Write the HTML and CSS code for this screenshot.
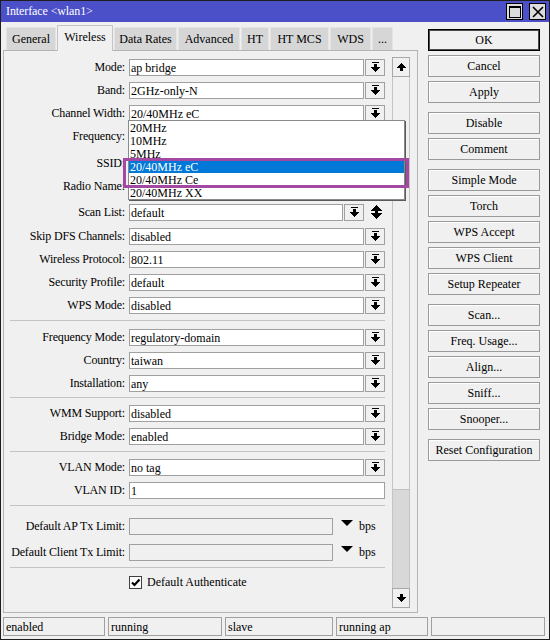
FILE: index.html
```html
<!DOCTYPE html>
<html>
<head>
<meta charset="utf-8">
<link rel="stylesheet" href="styles.css">
</head>
<body>
<svg class="defs" width="0" height="0">
  <defs>
    <symbol id="i-dd" viewBox="0 0 9 10">
      <rect x="1" y="0" width="7" height="1"/>
      <rect x="3" y="2" width="3" height="3"/>
      <rect x="0" y="5" width="9" height="1"/>
      <rect x="1" y="6" width="7" height="1"/>
      <rect x="2" y="7" width="5" height="1"/>
      <rect x="3" y="8" width="3" height="1"/>
      <rect x="4" y="9" width="1" height="1"/>
    </symbol>
    <symbol id="i-up" viewBox="0 0 9 8">
      <rect x="4" y="0" width="1" height="1"/>
      <rect x="3" y="1" width="3" height="1"/>
      <rect x="2" y="2" width="5" height="1"/>
      <rect x="1" y="3" width="7" height="1"/>
      <rect x="0" y="4" width="9" height="1"/>
      <rect x="3" y="5" width="3" height="3"/>
    </symbol>
    <symbol id="i-down" viewBox="0 0 9 8">
      <rect x="3" y="0" width="3" height="3"/>
      <rect x="0" y="3" width="9" height="1"/>
      <rect x="1" y="4" width="7" height="1"/>
      <rect x="2" y="5" width="5" height="1"/>
      <rect x="3" y="6" width="3" height="1"/>
      <rect x="4" y="7" width="1" height="1"/>
    </symbol>
    <symbol id="i-updown" viewBox="0 0 11 14">
      <rect x="5" y="0" width="1" height="1"/>
      <rect x="4" y="1" width="3" height="1"/>
      <rect x="3" y="2" width="5" height="1"/>
      <rect x="2" y="3" width="7" height="1"/>
      <rect x="1" y="4" width="9" height="1"/>
      <rect x="0" y="5" width="11" height="1"/>
      <rect x="4" y="6" width="3" height="2"/>
      <rect x="0" y="8" width="11" height="1"/>
      <rect x="1" y="9" width="9" height="1"/>
      <rect x="2" y="10" width="7" height="1"/>
      <rect x="3" y="11" width="5" height="1"/>
      <rect x="4" y="12" width="3" height="1"/>
      <rect x="5" y="13" width="1" height="1"/>
    </symbol>
  </defs>
</svg>

<div class="window">
  <div class="titlebar">
    <span class="title">Interface &lt;wlan1&gt;</span>
    <div class="tb-btns">
      <span class="tb-btn">
        <svg width="12" height="12" viewBox="0 0 12 12" shape-rendering="crispEdges"><rect x="0.5" y="0.5" width="11" height="11" fill="none" stroke="#000"/><rect x="0" y="0" width="12" height="2" fill="#000"/></svg>
      </span>
      <span class="tb-btn">
        <svg width="12" height="12" viewBox="0 0 12 12"><path d="M1 1 L11 11 M11 1 L1 11" stroke="#000" stroke-width="1.6" fill="none"/></svg>
      </span>
    </div>
  </div>

  <div class="main">
    <div class="left">
      <div class="tabs">
        <div class="tab t-general">General</div>
        <div class="tab active t-wireless">Wireless</div>
        <div class="tab t-rates">Data Rates</div>
        <div class="tab t-adv">Advanced</div>
        <div class="tab t-ht">HT</div>
        <div class="tab t-htmcs">HT MCS</div>
        <div class="tab t-wds">WDS</div>
        <div class="tab t-more">...</div>
      </div>

      <div class="panel">
        <div class="form">
          <div class="row first">
            <span class="lbl">Mode:</span>
            <div class="field"><span class="inp">ap bridge</span><span class="dd"><svg class="ico"><use href="#i-dd"/></svg></span></div>
          </div>
          <div class="row">
            <span class="lbl">Band:</span>
            <div class="field"><span class="inp">2GHz-only-N</span><span class="dd"><svg class="ico"><use href="#i-dd"/></svg></span></div>
          </div>
          <div class="row">
            <span class="lbl">Channel Width:</span>
            <div class="field"><span class="inp">20/40MHz eC</span><span class="dd"><svg class="ico"><use href="#i-dd"/></svg></span></div>
          </div>
          <div class="row">
            <span class="lbl">Frequency:</span>
            <div class="field"><span class="inp"></span><span class="dd"><svg class="ico"><use href="#i-dd"/></svg></span></div>
          </div>
          <div class="row mt10">
            <span class="lbl">SSID:</span>
            <div class="field"><span class="inp"></span><span class="dd"><svg class="ico"><use href="#i-dd"/></svg></span></div>
          </div>
          <div class="row">
            <span class="lbl">Radio Name:</span>
            <div class="field"><span class="inp"></span></div>
          </div>
          <div class="row mt9">
            <span class="lbl">Scan List:</span>
            <div class="field"><span class="inp">default</span><span class="dd"><svg class="ico"><use href="#i-dd"/></svg></span><span class="updown"><svg class="ico-ud"><use href="#i-updown"/></svg></span></div>
          </div>
          <div class="row mt7">
            <span class="lbl">Skip DFS Channels:</span>
            <div class="field"><span class="inp">disabled</span><span class="dd"><svg class="ico"><use href="#i-dd"/></svg></span></div>
          </div>
          <div class="row">
            <span class="lbl">Wireless Protocol:</span>
            <div class="field"><span class="inp">802.11</span><span class="dd"><svg class="ico"><use href="#i-dd"/></svg></span></div>
          </div>
          <div class="row">
            <span class="lbl">Security Profile:</span>
            <div class="field"><span class="inp">default</span><span class="dd"><svg class="ico"><use href="#i-dd"/></svg></span></div>
          </div>
          <div class="row">
            <span class="lbl">WPS Mode:</span>
            <div class="field"><span class="inp">disabled</span><span class="dd"><svg class="ico"><use href="#i-dd"/></svg></span></div>
          </div>

          <div class="sep mt7"></div>

          <div class="row mt7">
            <span class="lbl">Frequency Mode:</span>
            <div class="field"><span class="inp">regulatory-domain</span><span class="dd"><svg class="ico"><use href="#i-dd"/></svg></span></div>
          </div>
          <div class="row">
            <span class="lbl">Country:</span>
            <div class="field"><span class="inp">taiwan</span><span class="dd"><svg class="ico"><use href="#i-dd"/></svg></span></div>
          </div>
          <div class="row">
            <span class="lbl">Installation:</span>
            <div class="field"><span class="inp">any</span><span class="dd"><svg class="ico"><use href="#i-dd"/></svg></span></div>
          </div>

          <div class="sep"></div>

          <div class="row">
            <span class="lbl">WMM Support:</span>
            <div class="field"><span class="inp">disabled</span><span class="dd"><svg class="ico"><use href="#i-dd"/></svg></span></div>
          </div>
          <div class="row">
            <span class="lbl">Bridge Mode:</span>
            <div class="field"><span class="inp">enabled</span><span class="dd"><svg class="ico"><use href="#i-dd"/></svg></span></div>
          </div>

          <div class="sep mt7"></div>

          <div class="row">
            <span class="lbl">VLAN Mode:</span>
            <div class="field"><span class="inp">no tag</span><span class="dd"><svg class="ico"><use href="#i-dd"/></svg></span></div>
          </div>
          <div class="row">
            <span class="lbl">VLAN ID:</span>
            <div class="field"><span class="inp">1</span></div>
          </div>

          <div class="sep mt7"></div>

          <div class="row mt11">
            <span class="lbl">Default AP Tx Limit:</span>
            <div class="field"><span class="inp dis"></span><svg class="tri" width="12" height="6" viewBox="0 0 12 6"><polygon points="0,0 12,0 6,6"/></svg><span class="bps">bps</span></div>
          </div>
          <div class="row mt9">
            <span class="lbl">Default Client Tx Limit:</span>
            <div class="field"><span class="inp dis"></span><svg class="tri" width="12" height="6" viewBox="0 0 12 6"><polygon points="0,0 12,0 6,6"/></svg><span class="bps">bps</span></div>
          </div>

          <div class="sep mt7"></div>

          <div class="row">
            <span class="lbl"></span>
            <div class="field"><span class="chk"><svg width="11" height="11" viewBox="0 0 11 11"><path d="M2 5.5 L4.5 8 L9.5 2.5" stroke="#000" stroke-width="2.2" fill="none"/></svg></span><span class="chk-text">Default Authenticate</span></div>
          </div>
        </div>

        <div class="sb">
          <div class="sb-btn"><svg class="ico-sb"><use href="#i-up"/></svg></div>
          <div class="sb-track"><div class="sb-thumb"></div></div>
          <div class="sb-btn"><svg class="ico-sb"><use href="#i-down"/></svg></div>
        </div>

        <div class="popup">
          <div class="opt">20MHz</div>
          <div class="opt">10MHz</div>
          <div class="opt">5MHz</div>
          <div class="opt sel">20/40MHz eC</div>
          <div class="opt">20/40MHz Ce</div>
          <div class="opt">20/40MHz XX</div>
        </div>
        <div class="mark"></div>
      </div>
    </div>

    <div class="buttons">
      <div class="btn ok">OK</div>
      <div class="btn">Cancel</div>
      <div class="btn">Apply</div>
      <div class="btn grp">Disable</div>
      <div class="btn">Comment</div>
      <div class="btn grp">Simple Mode</div>
      <div class="btn">Torch</div>
      <div class="btn">WPS Accept</div>
      <div class="btn">WPS Client</div>
      <div class="btn">Setup Repeater</div>
      <div class="btn grp">Scan...</div>
      <div class="btn">Freq. Usage...</div>
      <div class="btn">Align...</div>
      <div class="btn">Sniff...</div>
      <div class="btn">Snooper...</div>
      <div class="btn grp">Reset Configuration</div>
    </div>
  </div>

  <div class="status">
    <div class="cell c1">enabled</div>
    <div class="cell c2">running</div>
    <div class="cell c3">slave</div>
    <div class="cell c4">running ap</div>
    <div class="cell c5"></div>
  </div>
</div>
</body>
</html>
```
FILE: styles.css
```css
* { box-sizing: border-box; }

body {
  margin: 0;
  font-family: "Liberation Serif", "Times New Roman", serif;
  font-size: 12px;
  color: #000;
  background: #f0f0f0;
}

.defs { position: absolute; width: 0; height: 0; overflow: hidden; }

.window {
  width: 550px;
  height: 640px;
  border: 1px solid #1e1e1e;
  display: flex;
  flex-direction: column;
  background: #f0f0f0;
}

/* title bar */
.titlebar {
  height: 21px;
  flex: none;
  background: #4b4fc8;
  color: #fff;
  display: flex;
  align-items: center;
  padding: 0 3px 0 5px;
}
.title { font-size: 12px; line-height: 21px; letter-spacing: -0.1px; }
.tb-btns { margin-left: auto; display: flex; gap: 6px; }
.tb-btn {
  width: 17px;
  height: 17px;
  border: 1px solid #000;
  background: #dcdcdc;
  display: flex;
  align-items: center;
  justify-content: center;
}

/* main area */
.main { display: flex; height: 591px; flex: none; }
.left { margin-left: 2px; width: 415px; display: flex; flex-direction: column; }

.tabs {
  height: 28px;
  display: flex;
  align-items: flex-end;
  padding-left: 3px;
  gap: 1px;
  position: relative;
  z-index: 1;
}
.tab {
  height: 23px;
  background: #d6d6d6;
  border: 1px solid #e4e4e4;
  border-bottom: none;
  text-align: center;
  line-height: 22px;
  white-space: nowrap;
}
.tab.active {
  height: 26px;
  margin-bottom: -1px;
  background: #f0f0f0;
  border-color: #c4c4c4;
  line-height: 22px;
}
.t-general { width: 50px; }
.t-wireless { width: 56px; }
.t-rates { width: 63px; }
.t-adv { width: 62px; }
.t-ht { width: 28px; }
.t-htmcs { width: 59px; }
.t-wds { width: 41px; }
.t-more { width: 21px; }

.panel {
  height: 563px;
  border: 1px solid #b4b4b4;
  display: flex;
  padding-right: 7px;
  position: relative;
}

.form {
  width: 381px;
  flex: none;
  padding-top: 7px;
  display: flex;
  flex-direction: column;
}
.row {
  display: grid;
  grid-template-columns: 121px 256px;
  column-gap: 4px;
  height: 17px;
  margin-top: 6px;
  align-items: center;
  flex: none;
}
.sep {
  height: 1px;
  background: #c4c4c4;
  margin-left: 6px;
  margin-top: 6px;
  flex: none;
}
.row.first { margin-top: 0; }
.form .mt7 { margin-top: 7px; }
.form .mt8 { margin-top: 8px; }
.form .mt9 { margin-top: 9px; }
.form .mt10 { margin-top: 10px; }
.form .mt11 { margin-top: 11px; }

.lbl { text-align: right; white-space: nowrap; line-height: 18px; letter-spacing: -0.15px; }
.field { display: flex; height: 17px; align-items: center; }
.inp {
  flex: 1;
  height: 17px;
  background: #fff;
  border: 1px solid #a0a0a0;
  padding-left: 1px;
  line-height: 16px;
  white-space: nowrap;
  overflow: hidden;
}
.inp.dis { flex: none; width: 204px; background: #f0f0f0; }
.dd {
  width: 20px;
  height: 17px;
  flex: none;
  margin-left: 1px;
  border: 1px solid #a0a0a0;
  background: #f0f0f0;
  display: flex;
  align-items: center;
  justify-content: center;
}
.ico { width: 9px; height: 10px; shape-rendering: crispEdges; }
.updown {
  width: 21px;
  height: 17px;
  flex: none;
  display: flex;
  align-items: center;
  justify-content: center;
  padding-left: 4px;
}
.ico-ud { width: 11px; height: 14px; shape-rendering: crispEdges; }
.tri { margin-left: 8px; margin-top: -6px; flex: none; }
.bps { margin-left: 6px; }

.chk {
  width: 13px;
  height: 13px;
  border: 1px solid #404040;
  background: #fff;
  display: flex;
  align-items: center;
  justify-content: center;
  flex: none;
}
.chk-text { margin-left: 5px; }

/* scrollbar */
.sb {
  width: 18px;
  height: 551px;
  margin-left: 7px;
  margin-top: 6px;
  display: flex;
  flex-direction: column;
  flex: none;
}
.sb-btn {
  height: 20px;
  flex: none;
  border: 1px solid #a8a8a8;
  background: #f0f0f0;
  display: flex;
  align-items: center;
  justify-content: center;
}
.ico-sb { width: 9px; height: 8px; shape-rendering: crispEdges; }
.sb-track {
  flex: 1;
  border-left: 1px solid #c4c4c4;
  border-right: 1px solid #c4c4c4;
  background: #f0f0f0;
  display: flex;
  flex-direction: column;
  justify-content: flex-end;
}
.sb-thumb { height: 99px; background: #d8d8d8; border-top: 1px solid #c0c0c0; }

/* popup list */
.popup {
  position: absolute;
  left: 124px;
  top: 69px;
  width: 277px;
  height: 80px;
  background: #fff;
  border: 1px solid #8a8a8a;
  box-shadow: 1px 1px 0 #5a5a5a;
  z-index: 2;
}
.opt { height: 13px; line-height: 14px; padding-left: 1px; white-space: nowrap; }
.opt.sel { background: #0078d7; color: #fff; }

.mark {
  position: absolute;
  left: 119px;
  top: 107px;
  width: 286px;
  height: 30px;
  border: 3px solid #a349a4;
  z-index: 3;
}

/* right buttons */
.buttons {
  margin-left: 10px;
  width: 112px;
  padding-top: 7px;
  display: flex;
  flex-direction: column;
  gap: 4px;
}
.btn {
  height: 22px;
  flex: none;
  border: 1px solid #9a9a9a;
  background: #f0f0f0;
  box-shadow: inset 1px 1px 0 #fff;
  text-align: center;
  line-height: 20px;
  white-space: nowrap;
}
.btn.grp { margin-top: 5px; }
.btn.ok { border-color: #000; box-shadow: inset 0 0 0 1px #4a4a4a; }

/* status bar */
.status {
  display: flex;
  gap: 3px;
  padding: 4px 0 0 2px;
  height: 26px;
  flex: none;
}
.cell {
  height: 19px;
  border: 1px solid #a0a0a0;
  padding-left: 2px;
  line-height: 18px;
  white-space: nowrap;
}
.c1 { width: 102px; }
.c2 { width: 114px; }
.c3 { width: 108px; }
.c4 { width: 92px; }
.c5 { width: 114px; }
```
